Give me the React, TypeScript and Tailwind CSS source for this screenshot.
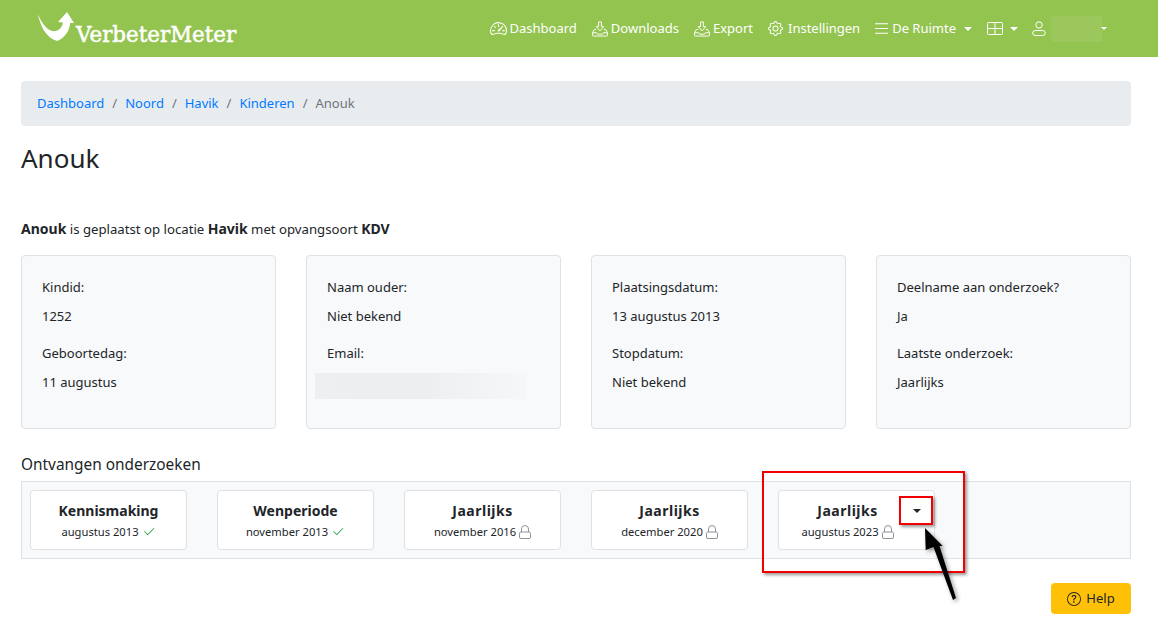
import { BsSpeedometer2, BsGear, BsList, BsCheck2, BsQuestionCircle } from "react-icons/bs";

const font = { fontFamily: '"Noto Sans", Tahoma, sans-serif' };

function Tray() {
  return (
    <svg width="16" height="16" viewBox="0 0 17 16" fill="none" stroke="currentColor" strokeWidth="1" className="shrink-0">
      <path d="M7 .5h3v5h2.500L8.500 10 4.500 5.500H7z" />
      <path d="M4.500 8.500H2.500L.5 12v2.500a1 1 0 0 0 1 1h14a1 1 0 0 0 1-1V12l-2-3.500h-2" />
      <path d="M.5 12h4.500l1 1.500h5l1-1.500h4.500" />
    </svg>
  );
}

function Lock() {
  return (
    <svg width="12" height="14" viewBox="0 0 12 14" fill="none" stroke="#8f9399" strokeWidth="1" className="shrink-0">
      <path d="M2.500 7V4a3.500 3.500 0 0 1 7 0v3" />
      <rect x="0.500" y="7" width="11" height="6.500" rx="1.500" />
    </svg>
  );
}

function Caret({ className = "border-x-[4px] border-t-[4px]" }: { className?: string }) {
  return <span className={`inline-block h-0 w-0 border-x-transparent border-t-current ${className}`} />;
}

function NavItem({ icon, label, gap = "gap-[3px]" }: { icon: React.ReactNode; label: string; gap?: string }) {
  return (
    <a className={`flex items-center text-white ${gap}`}>
      {icon}
      <span>{label}</span>
    </a>
  );
}

function InfoCard({ rows }: { rows: [string, string | null][] }) {
  return (
    <div className="h-[174px] rounded border border-[#dee2e6] bg-[#f8f9fa] pl-[20px] pt-[21px]">
      {rows.map(([k, v], i) => (
        <div key={k} className={i === 1 ? "mt-[16px]" : ""}>
          <p className="h-[21px] leading-[21px]">{k}</p>
          {v === null ? (
            <div className="mt-[9px] -ml-[12px] h-[26px] w-[211px] bg-gradient-to-r from-[#eeeff1] via-[#edeef0] to-[#f6f7f8]" />
          ) : (
            <p className="mt-[8px] h-[21px] leading-[21px]">{v}</p>
          )}
        </div>
      ))}
    </div>
  );
}

function StudyCard({ title, sub, done, caret, titleClass = "" }: { title: string; sub: string; done?: boolean; caret?: boolean; titleClass?: string }) {
  return (
    <div className={`relative flex h-[60px] w-[157px] flex-col items-center rounded border border-[#dee2e6] bg-white pt-[8px] ${caret ? "pr-[18px]" : ""}`}>
      <div className={`h-[23px] text-[14px] font-bold leading-[23px] ${titleClass}`}>{title}</div>
      <div className="flex h-[20px] items-center gap-[3px] text-[11.2px]">
        <span>{sub}</span>
        {done ? <BsCheck2 className="text-[#28a745]" size={14} /> : <Lock />}
      </div>
      {caret && <Caret className="absolute right-[13px] top-[18px] border-x-[4px] border-t-[4px] text-[#212529]" />}
    </div>
  );
}

export default function App() {
  return (
    <div className="relative min-h-[628px] overflow-hidden bg-white text-[13px] text-[#212529]" style={font}>
      <header className="flex h-[57px] items-center justify-between bg-[#93c44f] pl-[37px] pr-[51px]">
        <div className="flex items-center">
          <svg width="38" height="32" viewBox="0 0 38 32" className="-mt-[4px]">
            <path d="M1 3C3 14 8 26 20 30 28 27 33 19 33 12h4L30 1 21 11l5 .5C25 17 21 21 15 20 9 18 4 11 1 3z" fill="#fff" />
            <path d="M1 3C3 10 6 17 14 20 8 19 3 12 1 3z" fill="#dfe5d5" />
          </svg>
          <span className="ml-[1px] mt-[9px] translate-y-[2px] text-[21.4px] font-normal leading-none text-white [-webkit-text-stroke:0.5px_white]" style={{ fontFamily: '"DejaVu Serif", serif' }}>
            VerbeterMeter
          </span>
        </div>
        <nav className="flex items-center gap-[15px]">
          <NavItem icon={<BsSpeedometer2 size={17} />} label="Dashboard" />
          <NavItem icon={<Tray />} label="Downloads" />
          <NavItem icon={<Tray />} label="Export" />
          <NavItem icon={<BsGear size={15} />} label="Instellingen" gap="gap-[5px]" />
          <a className="-ml-[3px] flex items-center gap-[1px] text-white">
            <BsList size={19} />
            <span>De Ruimte</span>
            <Caret className="ml-[7px] border-x-[4px] border-t-[4px]" />
          </a>
          <a className="flex items-center gap-[7px] text-white">
            <svg width="16" height="13" viewBox="0 0 16 13" fill="none" stroke="currentColor">
              <rect x=".5" y=".5" width="15" height="12" rx="1" />
              <path d="M.5 6.500h15M8 .5v12" />
            </svg>
            <Caret />
          </a>
          <a className="-ml-[1px] flex items-center text-white">
            <svg width="14" height="15" viewBox="0 0 14 15" fill="none" stroke="currentColor">
              <circle cx="7" cy="4" r="3.200" />
              <rect x=".7" y="9.500" width="12.600" height="5" rx="2.500" />
            </svg>
            <span className="ml-[5px] h-[26px] w-[51px] bg-[#9bc75c]" />
            <Caret className="-ml-[1px] border-x-[3px] border-t-[3px]" />
          </a>
        </nav>
      </header>

      <main className="pl-[21px] pr-[27px] pt-[24px]">
        <nav className="flex h-[45px] items-center gap-[8px] rounded bg-[#e9ecef] px-[16px] pt-[1px]">
          {["Dashboard", "Noord", "Havik", "Kinderen"].map((c) => (
            <span key={c} className="flex gap-[8px]">
              <a className="text-[#007bff]">{c}</a>
              <span className="text-[#6c757d]">/</span>
            </span>
          ))}
          <span className="text-[#6c757d]">Anouk</span>
        </nav>
        <h1 className="mt-[15px] h-[34px] text-[26px] font-normal leading-[34px]">Anouk</h1>
        <p className="mt-[43px] h-[21px] text-[13.2px] leading-[21px]">
          <b className="text-[14px]">Anouk</b> is geplaatst op locatie <b className="text-[14px]">Havik</b> met opvangsoort <b className="text-[14px]">KDV</b>
        </p>
        <div className="mt-[16px] grid grid-cols-4 gap-[30px]">
          <InfoCard rows={[["Kindid:", "1252"], ["Geboortedag:", "11 augustus"]]} />
          <InfoCard rows={[["Naam ouder:", "Niet bekend"], ["Email:", null]]} />
          <InfoCard rows={[["Plaatsingsdatum:", "13 augustus 2013"], ["Stopdatum:", "Niet bekend"]]} />
          <InfoCard rows={[["Deelname aan onderzoek?", "Ja"], ["Laatste onderzoek:", "Jaarlijks"]]} />
        </div>
        <h2 className="mt-[25px] h-[22px] text-[15.4px] font-normal leading-[22px]">Ontvangen onderzoeken</h2>
        <div className="mt-[5px] flex h-[78px] items-center gap-[30px] border border-[#dee2e6] bg-[#f8f9fa] pl-[8px]">
          <StudyCard title="Kennismaking" sub="augustus 2013" done />
          <StudyCard title="Wenperiode" sub="november 2013" done />
          <StudyCard title="Jaarlijks" sub="november 2016" titleClass="tracking-[0.5px]" />
          <StudyCard title="Jaarlijks" sub="december 2020" titleClass="tracking-[0.5px]" />
          <StudyCard title="Jaarlijks" sub="augustus 2023" caret titleClass="tracking-[0.5px]" />
        </div>
        <div className="mt-[24px] flex justify-end">
          <button className="flex h-[31px] w-[80px] items-center justify-center gap-[5px] rounded bg-[#ffc107] text-[#212529]">
            <BsQuestionCircle size={14} />
            Help
          </button>
        </div>
      </main>

      <div className="absolute left-[762px] top-[471px] h-[102px] w-[203px] border-2 border-[#f00000] shadow-[2px_2px_3px_rgba(0,0,0,0.4)]" />
      <div className="absolute left-[899px] top-[496px] h-[29px] w-[34px] border-2 border-[#f00000] shadow-[2px_2px_3px_rgba(0,0,0,0.4)]" />
      <svg className="absolute left-[915px] top-[522px]" width="50" height="85" viewBox="0 0 50 85">
        <g style={{ filter: "drop-shadow(2px 2px 2px rgba(0,0,0,.4))" }}>
          <path d="M10 6L10.700 28 18.500 25 38 78 41 76 24.500 24 27.700 24z" fill="#000" />
        </g>
      </svg>
    </div>
  );
}
